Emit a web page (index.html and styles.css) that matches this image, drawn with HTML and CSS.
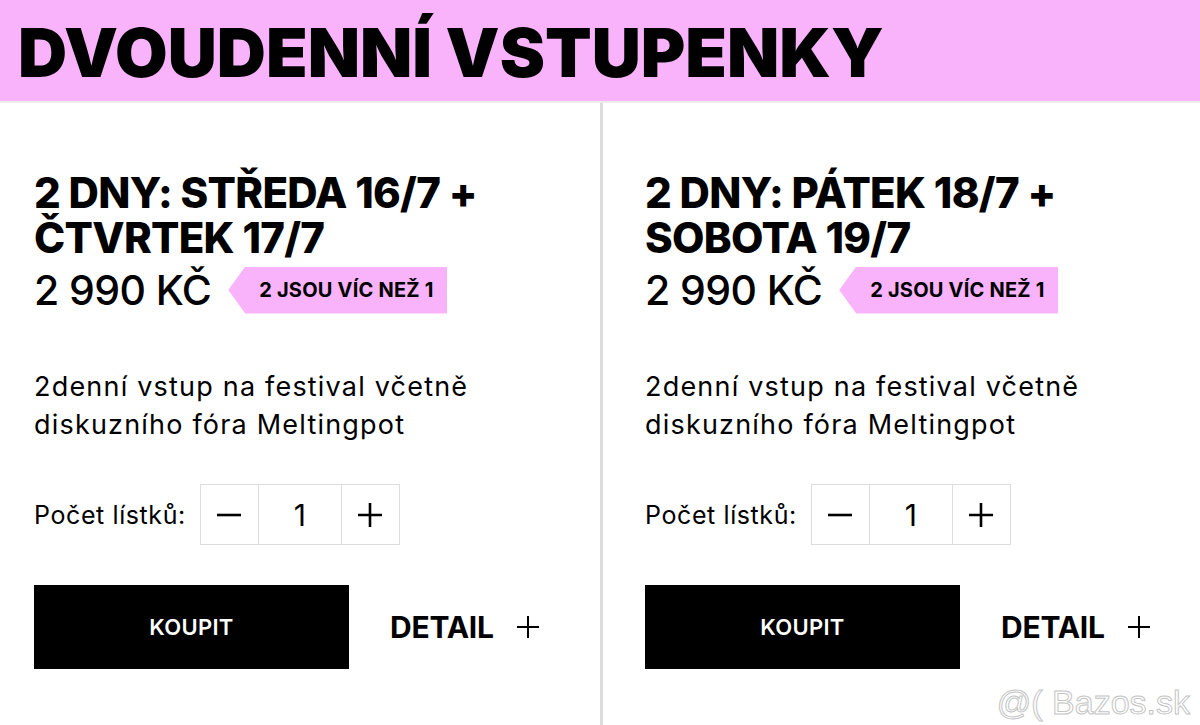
FILE: index.html
```html
<!DOCTYPE html>
<html lang="cs">
<head>
    <meta charset="UTF-8">
    <title>Dvoudenní vstupenky</title>
    <link rel="stylesheet" href="styles.css">
</head>
<body>

<header class="page-head">
    <h1>DVOUDENNÍ VSTUPENKY</h1>
</header>

<div class="tickets">
    <div class="ticket ticket-left">
        <h2>2 DNY: STŘEDA 16/7 +<br>ČTVRTEK 17/7</h2>
        <div class="price-row">
            <span class="price">2 990 KČ</span>
            <span class="badge">2 JSOU VÍC NEŽ 1</span>
        </div>
        <p class="desc">2denní vstup na festival včetně diskuzního fóra Meltingpot</p>
        <div class="qty-row">
            <span class="qty-label">Počet lístků:</span>
            <div class="stepper">
                <button class="step-btn"><svg width="26" height="26" viewBox="0 0 26 26"><path d="M1 13h24" stroke="#000" stroke-width="2.6"/></svg></button>
                <span class="step-val">1</span>
                <button class="step-btn"><svg width="26" height="26" viewBox="0 0 26 26"><path d="M1 13h24M13 1v24" stroke="#000" stroke-width="2.6"/></svg></button>
            </div>
        </div>
        <div class="actions">
            <button class="buy">KOUPIT</button>
            <span class="detail">DETAIL</span>
            <svg class="detail-plus" width="22" height="22" viewBox="0 0 22 22"><path d="M0 11h22M11 0v22" stroke="#000" stroke-width="2"/></svg>
        </div>
    </div>

    <div class="divider"></div>

    <div class="ticket ticket-right">
        <h2>2 DNY: PÁTEK 18/7 +<br>SOBOTA 19/7</h2>
        <div class="price-row">
            <span class="price">2 990 KČ</span>
            <span class="badge">2 JSOU VÍC NEŽ 1</span>
        </div>
        <p class="desc">2denní vstup na festival včetně diskuzního fóra Meltingpot</p>
        <div class="qty-row">
            <span class="qty-label">Počet lístků:</span>
            <div class="stepper">
                <button class="step-btn"><svg width="26" height="26" viewBox="0 0 26 26"><path d="M1 13h24" stroke="#000" stroke-width="2.6"/></svg></button>
                <span class="step-val">1</span>
                <button class="step-btn"><svg width="26" height="26" viewBox="0 0 26 26"><path d="M1 13h24M13 1v24" stroke="#000" stroke-width="2.6"/></svg></button>
            </div>
        </div>
        <div class="actions">
            <button class="buy">KOUPIT</button>
            <span class="detail">DETAIL</span>
            <svg class="detail-plus" width="22" height="22" viewBox="0 0 22 22"><path d="M0 11h22M11 0v22" stroke="#000" stroke-width="2"/></svg>
        </div>
    </div>
</div>

<div class="watermark">@( Bazos.sk</div>

</body>
</html>
```

FILE: styles.css
```css
body {
    margin: 0;
    padding: 0;
    font-family: Inter, "Noto Sans", sans-serif;
    color: #000;
    background: #fff;
    width: 1200px;
    height: 725px;
    overflow: hidden;
    position: relative;
}

.page-head {
    background-color: #f8b3fb;
    height: 101px;
    border-bottom: 2px solid #ececec;
    padding-left: 18px;
    display: flex;
    align-items: center;
}

.page-head h1 {
    margin: 0;
    font-size: 68px;
    font-weight: 900;
    letter-spacing: 0;
    line-height: 1;
    padding-top: 2px;
}

.tickets {
    display: flex;
    height: 622px;
}

.divider {
    width: 3px;
    background-color: #dcdcdc;
    flex-shrink: 0;
}

.ticket {
    box-sizing: border-box;
    padding-top: 67px;
}

.ticket-left {
    width: 600px;
    padding-left: 34px;
}

.ticket-right {
    width: 597px;
    padding-left: 42px;
}

.ticket h2 {
    margin: 0;
    font-size: 42px;
    font-weight: 800;
    line-height: 45px;
    letter-spacing: -0.7px;
}

.price-row {
    display: flex;
    align-items: center;
    margin-top: 6px;
    height: 48px;
}

.price {
    font-size: 41px;
    font-weight: 500;
    letter-spacing: -0.6px;
}

.badge {
    margin-left: 17px;
    background-color: #f8b3fb;
    height: 47px;
    line-height: 47px;
    padding: 0 14px 0 31px;
    font-size: 20px;
    font-weight: 700;
    letter-spacing: 0.2px;
    clip-path: polygon(17px 0, 100% 0, 100% 100%, 17px 100%, 0 50%);
}

.desc {
    margin: 54px 0 0;
    font-size: 27px;
    line-height: 38px;
    letter-spacing: 1.2px;
    width: 490px;
}

.qty-row {
    display: flex;
    align-items: center;
    margin-top: 40px;
}

.qty-label {
    font-size: 25px;
    letter-spacing: 0.6px;
    margin-right: 14px;
}

.stepper {
    display: flex;
    border: 1px solid #dcdcdc;
    height: 59px;
}

.step-btn {
    width: 57px;
    border: none;
    background: #fff;
    padding: 0;
    display: flex;
    align-items: center;
    justify-content: center;
}

.step-val {
    width: 82px;
    border-left: 1px solid #dcdcdc;
    border-right: 1px solid #dcdcdc;
    display: flex;
    align-items: center;
    justify-content: center;
    font-size: 30px;
}

.actions {
    display: flex;
    align-items: center;
    margin-top: 40px;
}

.buy {
    width: 315px;
    height: 84px;
    background: #000;
    color: #fff;
    border: none;
    font-family: inherit;
    font-size: 22px;
    font-weight: 600;
    letter-spacing: 0.3px;
}

.detail {
    margin-left: 41px;
    font-size: 30px;
    font-weight: 700;
    letter-spacing: -0.2px;
}

.detail-plus {
    margin-left: 23px;
}

.watermark {
    position: absolute;
    right: 10px;
    bottom: 3px;
    font-family: "Liberation Sans", Arial, sans-serif;
    font-size: 34px;
    color: transparent;
    -webkit-text-stroke: 1px #c4c4c4;
}
```
